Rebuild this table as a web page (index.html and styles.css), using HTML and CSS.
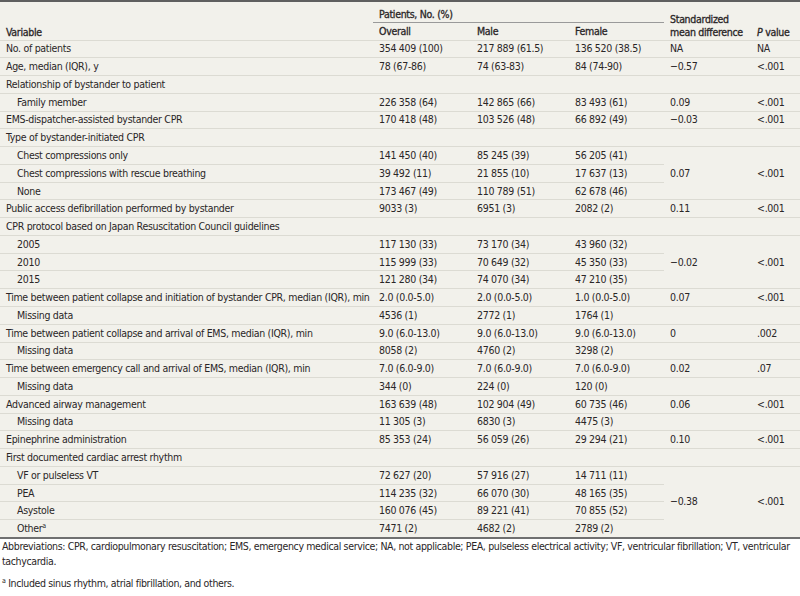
FILE: index.html
```html
<!DOCTYPE html>
<html>
<head>
<meta charset="utf-8">
<link rel="stylesheet" href="styles.css">
</head>
<body>
<table class="tbl">
  <colgroup>
    <col class="c-var"><col class="c-num"><col class="c-num"><col class="c-fem"><col class="c-smd"><col class="c-p">
  </colgroup>
  <thead>
    <tr class="h1">
      <th rowspan="2" class="hb">Variable</th>
      <th colspan="3" class="grp">Patients, No. (%)</th>
      <th rowspan="2" class="hb">Standardized<br>mean difference</th>
      <th rowspan="2" class="hb"><i>P</i> value</th>
    </tr>
    <tr class="h2">
      <th>Overall</th><th>Male</th><th>Female</th>
    </tr>
  </thead>
  <tbody>
    <tr><td>No. of patients</td><td>354 409 (100)</td><td>217 889 (61.5)</td><td>136 520 (38.5)</td><td>NA</td><td>NA</td></tr>
    <tr><td>Age, median (IQR), y</td><td>78 (67-86)</td><td>74 (63-83)</td><td>84 (74-90)</td><td>−0.57</td><td>&lt;.001</td></tr>
    <tr><td>Relationship of bystander to patient</td><td></td><td></td><td></td><td></td><td></td></tr>
    <tr><td class="ind">Family member</td><td>226 358 (64)</td><td>142 865 (66)</td><td>83 493 (61)</td><td>0.09</td><td>&lt;.001</td></tr>
    <tr><td>EMS-dispatcher-assisted bystander CPR</td><td>170 418 (48)</td><td>103 526 (48)</td><td>66 892 (49)</td><td>−0.03</td><td>&lt;.001</td></tr>
    <tr><td>Type of bystander-initiated CPR</td><td></td><td></td><td></td><td></td><td></td></tr>
    <tr><td class="ind">Chest compressions only</td><td>141 450 (40)</td><td>85 245 (39)</td><td>56 205 (41)</td><td rowspan="3">0.07</td><td rowspan="3">&lt;.001</td></tr>
    <tr><td class="ind">Chest compressions with rescue breathing</td><td>39 492 (11)</td><td>21 855 (10)</td><td>17 637 (13)</td></tr>
    <tr><td class="ind">None</td><td>173 467 (49)</td><td>110 789 (51)</td><td>62 678 (46)</td></tr>
    <tr><td>Public access defibrillation performed by bystander</td><td>9033 (3)</td><td>6951 (3)</td><td>2082 (2)</td><td>0.11</td><td>&lt;.001</td></tr>
    <tr><td>CPR protocol based on Japan Resuscitation Council guidelines</td><td></td><td></td><td></td><td></td><td></td></tr>
    <tr><td class="ind">2005</td><td>117 130 (33)</td><td>73 170 (34)</td><td>43 960 (32)</td><td rowspan="3">−0.02</td><td rowspan="3">&lt;.001</td></tr>
    <tr><td class="ind">2010</td><td>115 999 (33)</td><td>70 649 (32)</td><td>45 350 (33)</td></tr>
    <tr><td class="ind">2015</td><td>121 280 (34)</td><td>74 070 (34)</td><td>47 210 (35)</td></tr>
    <tr><td>Time between patient collapse and initiation of bystander CPR, median (IQR), min</td><td>2.0 (0.0-5.0)</td><td>2.0 (0.0-5.0)</td><td>1.0 (0.0-5.0)</td><td>0.07</td><td>&lt;.001</td></tr>
    <tr><td class="ind">Missing data</td><td>4536 (1)</td><td>2772 (1)</td><td>1764 (1)</td><td></td><td></td></tr>
    <tr><td>Time between patient collapse and arrival of EMS, median (IQR), min</td><td>9.0 (6.0-13.0)</td><td>9.0 (6.0-13.0)</td><td>9.0 (6.0-13.0)</td><td>0</td><td>.002</td></tr>
    <tr><td class="ind">Missing data</td><td>8058 (2)</td><td>4760 (2)</td><td>3298 (2)</td><td></td><td></td></tr>
    <tr><td>Time between emergency call and arrival of EMS, median (IQR), min</td><td>7.0 (6.0-9.0)</td><td>7.0 (6.0-9.0)</td><td>7.0 (6.0-9.0)</td><td>0.02</td><td>.07</td></tr>
    <tr><td class="ind">Missing data</td><td>344 (0)</td><td>224 (0)</td><td>120 (0)</td><td></td><td></td></tr>
    <tr><td>Advanced airway management</td><td>163 639 (48)</td><td>102 904 (49)</td><td>60 735 (46)</td><td>0.06</td><td>&lt;.001</td></tr>
    <tr><td class="ind">Missing data</td><td>11 305 (3)</td><td>6830 (3)</td><td>4475 (3)</td><td></td><td></td></tr>
    <tr><td>Epinephrine administration</td><td>85 353 (24)</td><td>56 059 (26)</td><td>29 294 (21)</td><td>0.10</td><td>&lt;.001</td></tr>
    <tr><td>First documented cardiac arrest rhythm</td><td></td><td></td><td></td><td></td><td></td></tr>
    <tr><td class="ind">VF or pulseless VT</td><td>72 627 (20)</td><td>57 916 (27)</td><td>14 711 (11)</td><td rowspan="4">−0.38</td><td rowspan="4">&lt;.001</td></tr>
    <tr><td class="ind">PEA</td><td>114 235 (32)</td><td>66 070 (30)</td><td>48 165 (35)</td></tr>
    <tr><td class="ind">Asystole</td><td>160 076 (45)</td><td>89 221 (41)</td><td>70 855 (52)</td></tr>
    <tr><td class="ind">Other<sup>a</sup></td><td>7471 (2)</td><td>4682 (2)</td><td>2789 (2)</td></tr>
  </tbody>
</table>
<div class="notes">
  <p>Abbreviations: CPR, cardiopulmonary resuscitation; EMS, emergency medical service; NA, not applicable; PEA, pulseless electrical activity; VF, ventricular fibrillation; VT, ventricular tachycardia.</p>
  <p class="fn"><sup>a</sup> Included sinus rhythm, atrial fibrillation, and others.</p>
</div>
</body>
</html>
```
FILE: styles.css
```css
body {
  margin: 0;
  background: #ffffff;
  color: #2a2627;
  font-family: "DejaVu Sans Condensed", "Liberation Sans Narrow", sans-serif;
  letter-spacing: -0.3px;
}

.tbl {
  width: 800px;
  table-layout: fixed;
  border-collapse: collapse;
  background: #f2f1eb;
  font-size: 10.5px;
  border-top: 2px solid #5f5f5f;
  border-bottom: 2px solid #707070;
}

.c-var { width: 373px; }
.c-num { width: 98px; }
.c-fem { width: 95px; }
.c-smd { width: 87px; }
.c-p { width: 49px; }

.tbl th {
  text-align: left;
  font-weight: normal;
  -webkit-text-stroke: 0.3px #2a2627;
  padding: 0 0 0 6px;
  line-height: 13px;
  white-space: nowrap;
  vertical-align: bottom;
}

.tbl .hb {
  padding-bottom: 1px;
  border-bottom: 1px solid #dcdbd3;
}

.h1 { height: 21px; }
.h2 { height: 18px; }

.tbl .grp {
  padding-bottom: 1px;
  border-bottom: 1px solid #9a9a9a;
}

.h2 th {
  padding-bottom: 2px;
  border-bottom: 1px solid #dcdbd3;
}

.tbl td {
  padding: 0 0 0 6px;
  height: 16.78px;
  line-height: 13px;
  white-space: nowrap;
  vertical-align: middle;
  border-bottom: 1px solid #dcdbd3;
}

.tbl td.ind { padding-left: 17px; }

sup {
  font-size: 7px;
  line-height: 0;
  vertical-align: 4px;
}

.notes {
  padding: 0 4px 0 2px;
  font-size: 10.5px;
  line-height: 15px;
  letter-spacing: -0.36px;
}

.notes p { margin: 0; }
.notes .fn { margin-top: 7px; }
```
